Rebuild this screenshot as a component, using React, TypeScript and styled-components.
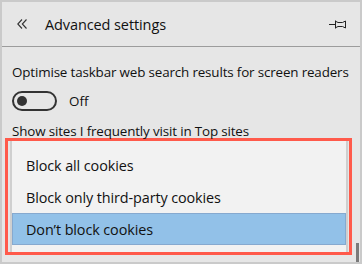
import React from "react";
import styled, { createGlobalStyle } from "styled-components";

const Global = createGlobalStyle`
  html, body { margin: 0; padding: 0; background: #e6e6e6; }
  body { font-family: "Open Sans", "Noto Sans", sans-serif; }
`;

const Panel = styled.div`
  position: relative;
  box-sizing: border-box;
  width: 362px;
  height: 264px;
  border: 2px solid #cacaca;
  background: #e6e6e6;
  overflow: hidden;
  color: #111;
  font-family: "Open Sans", "Noto Sans", sans-serif;
`;

const Header = styled.div`
  display: flex;
  align-items: center;
  height: 44px;
  border-bottom: 1px solid #9c9c9c;
  padding: 0 14px 0 15px;
`;

const Title = styled.div`
  flex: 1;
  margin-left: 17px;
  font-size: 14.5px;
  letter-spacing: -0.1px;
`;

const Section = styled.div`
  padding-left: 10px;
`;

const Label = styled.div<{ $top: number }>`
  margin-top: ${(p) => p.$top}px;
  font-size: 13.4px;
  line-height: 18px;
  letter-spacing: -0.15px;
`;

const ToggleRow = styled.div`
  display: flex;
  align-items: center;
  margin-top: 10px;
  height: 20px;
`;

const Track = styled.div`
  box-sizing: border-box;
  width: 45px;
  height: 20px;
  border: 2px solid #333;
  border-radius: 10px;
  display: flex;
  align-items: center;
  padding-left: 3px;
`;

const Knob = styled.div`
  width: 10px;
  height: 10px;
  border-radius: 50%;
  background: #333;
`;

const ToggleText = styled.span`
  margin-left: 12px;
  font-size: 13.4px;
`;

const Callout = styled.div`
  box-sizing: border-box;
  width: 347px;
  height: 117px;
  margin: -2px 0 0 3px;
  border: 3px solid #ff5a4b;
  padding: 0 1px 0 2px;
`;

const Dropdown = styled.div`
  box-sizing: border-box;
  height: 100%;
  background: #f2f2f2;
  border-left: 2px solid #cfcfcf;
  border-right: 2px solid #cfcfcf;
  padding-top: 8px;
`;

const Option = styled.div<{ $selected?: boolean }>`
  box-sizing: border-box;
  height: 32px;
  display: flex;
  align-items: center;
  padding-left: 13px;
  font-size: 14.4px;
  letter-spacing: -0.1px;
  background: ${(p) => (p.$selected ? "#92c1e8" : "transparent")};
  border: 1px solid ${(p) => (p.$selected ? "#86a9cf" : "transparent")};
`;

const Thumb = styled.div`
  position: absolute;
  left: 354px;
  top: 241px;
  width: 3px;
  height: 30px;
  background: #7a7a7a;
`;

const Back = () => (
  <svg width="11" height="10" viewBox="0 0 11 10" fill="none" stroke="#333" strokeWidth="1.1">
    <path d="M5 0.5 L0.8 5 L5 9.5" />
    <path d="M9.5 0.5 L5.3 5 L9.5 9.5" />
  </svg>
);

const Pin = () => (
  <svg width="17" height="9" viewBox="0 0 17 9" fill="none" stroke="#222" strokeWidth="1">
    <path d="M0 4.5 H6" />
    <path d="M6.5 0.5 V8.5" />
    <path d="M7 1.5 L9 2.5 H13.5 L16.5 1 V8 L13.5 6.5 H9 L7 7.5" />
  </svg>
);

export default function App() {
  return (
    <>
      <Global />
      <Panel>
        <Header>
          <Back />
          <Title>Advanced settings</Title>
          <Pin />
        </Header>
        <Section>
          <Label $top={16}>Optimise taskbar web search results for screen readers</Label>
          <ToggleRow>
            <Track>
              <Knob />
            </Track>
            <ToggleText>Off</ToggleText>
          </ToggleRow>
          <Label $top={11}>Show sites I frequently visit in Top sites</Label>
        </Section>
        <Callout>
          <Dropdown>
            <Option>Block all cookies</Option>
            <Option>Block only third-party cookies</Option>
            <Option $selected>Don’t block cookies</Option>
          </Dropdown>
        </Callout>
        <Thumb />
      </Panel>
    </>
  );
}
